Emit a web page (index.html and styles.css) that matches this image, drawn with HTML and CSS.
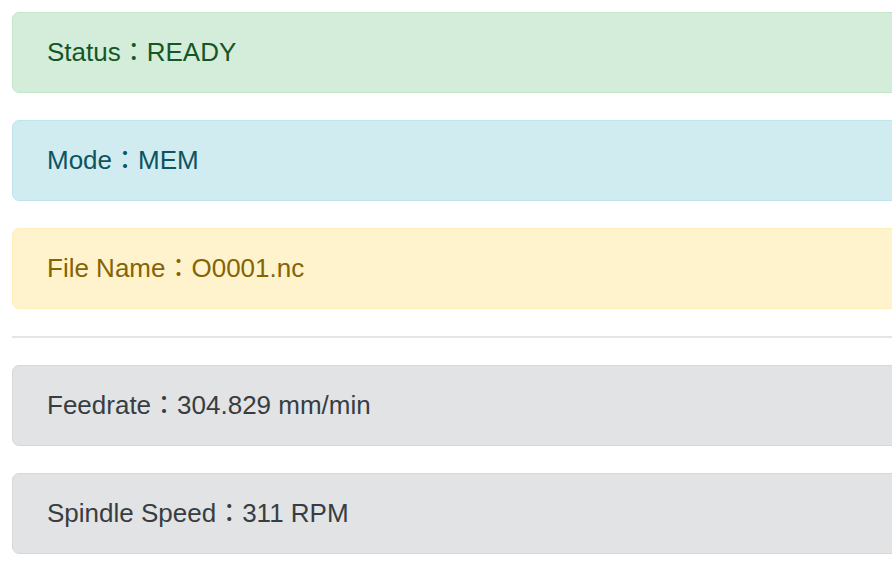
FILE: index.html
```html
<!DOCTYPE html>
<html lang="en">
<head>
<meta charset="utf-8">
<title>Machine Status</title>
<link rel="stylesheet" href="styles.css">
</head>
<body>
<main class="panel">
  <div class="alert alert-success">Status：READY</div>
  <div class="alert alert-info">Mode：MEM</div>
  <div class="alert alert-warning">File Name：O0001.nc</div>
  <hr class="divider">
  <div class="alert alert-secondary">Feedrate：304.829 mm/min</div>
  <div class="alert alert-secondary">Spindle Speed：311 RPM</div>
</main>
</body>
</html>
```
FILE: styles.css
```css
html {
  overflow: hidden;
}
body {
  margin: 0;
  padding: 12px 0 0 12px;
  background: #fff;
  font-family: "Liberation Sans", Arial, "Noto Sans CJK TC", sans-serif;
}
.panel {
  width: 1000px;
}
.alert {
  box-sizing: border-box;
  height: 81px;
  padding: 20px 34px;
  margin-bottom: 27px;
  border: 1px solid transparent;
  border-radius: 7px;
  font-size: 26px;
  line-height: 39px;
}
.alert-success {
  background: #d4edda;
  border-color: #c3e6cb;
  color: #155724;
}
.alert-info {
  background: #d1ecf1;
  border-color: #bee5eb;
  color: #0c5460;
}
.alert-warning {
  background: #fff3cd;
  border-color: #ffeeba;
  color: #856404;
}
.alert-secondary {
  background: #e2e3e5;
  border-color: #d6d8db;
  color: #383d41;
}
.divider {
  margin: 0 0 27px 0;
  border: 0;
  border-top: 2px solid rgba(0, 0, 0, 0.1);
}
```
